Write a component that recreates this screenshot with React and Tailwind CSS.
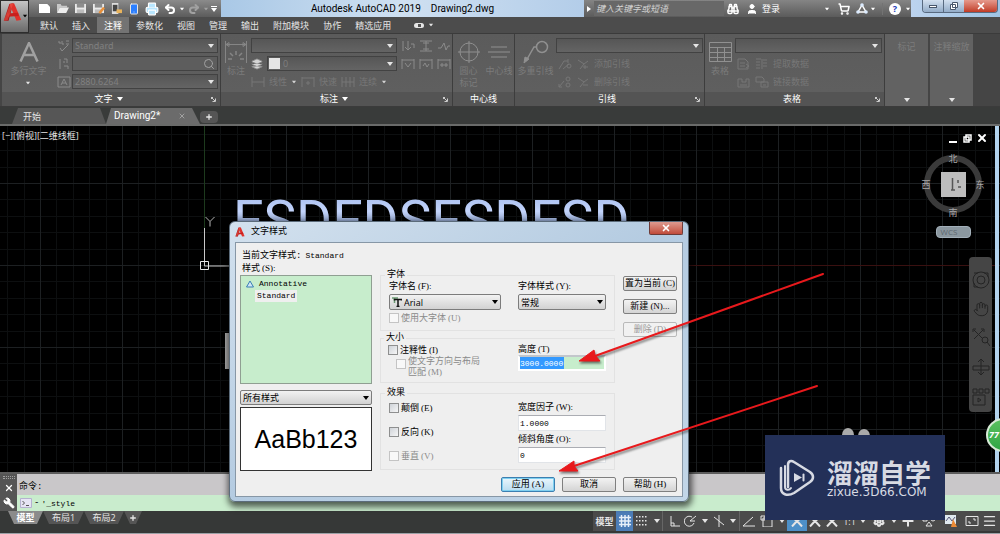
import React from "react";
import {
  Smartphone, Printer, Undo2, Redo2, User, Binoculars,
  ShoppingCart, Wrench, X, Plus, Settings, Menu, Hand, Layers, Search,
} from "lucide-react";

const SANS = "font-['Open_Sans','Noto_Sans_CJK_SC',sans-serif]";
const MONO = "font-['Liberation_Mono','Noto_Sans_CJK_SC',monospace]";

function Caret({ className = "" }) {
  return (
    <svg viewBox="0 0 6 4" className={"h-1 w-1.5 shrink-0 " + className} aria-hidden="true">
      <path d="M0 0h6L3 4z" fill="currentColor" />
    </svg>
  );
}

function LogoA({ className }) {
  return (
    <svg viewBox="0 0 24 24" className={className} aria-hidden="true">
      <path d="M1 23L8 2l5-1-6 22z" fill="#a81618" />
      <path d="M8 2l6-1 9 21-6 1z" fill="#e0312b" />
      <path d="M5 14l14-1 1 4-14 1z" fill="#c8201e" />
      <path d="M9 2l4-1-7 21-5 1z" fill="#ef5a4b" opacity=".55" />
    </svg>
  );
}

/* ---------- title bar ---------- */

function Disk() {
  return (
    <>
      <path d="M1 1h12v10H1z" fill="#e9e9e9" />
      <path d="M3 1h8v4H3z" fill="#8d8d8d" />
      <path d="M3 7h8v4H3z" fill="#bcbcbc" />
    </>
  );
}

const quickTools = [
  ["新建", <path key="n" d="M1 1h9l3 3v7H1z" fill="#fff" />],
  ["打开", <g key="o"><path d="M1 1h4l1 2h6v2H4l-3 6z" fill="#c8c8c8" /><path d="M4 5h10l-3 6H1z" fill="#ededed" /></g>],
  ["保存", <Disk key="s" />],
  ["另存为", <g key="a"><Disk /><path d="M7 10l5-6 2 2-5 6z" fill="#e8903a" /></g>],
  ["从移动设备打开", <g key="m"><path d="M2 0h7v12H2z" fill="#dcdcdc" /><path d="M3 2h5v7H3z" fill="#444" /><path d="M7 7h6v4H7z" fill="#e9b45c" /></g>],
  ["保存到移动设备", null],
  ["打印", null],
];

function TitleBar() {
  return (
    <div className="flex h-[17px] items-stretch text-[10px] leading-none">
      <div className="flex w-48 items-center bg-linear-to-b from-[#8b8b8b] to-[#5c5c5c] pl-1.5 text-white">
        {quickTools.map(([name, art]) => (
          <button key={name} aria-label={name} className="flex w-[18px] shrink-0 justify-center">
            {art && <svg viewBox="0 0 14 12" className="h-[11px] w-[13px]">{art}</svg>}
            {name === "保存到移动设备" && <Smartphone className="size-3 fill-blue-500 text-neutral-200" />}
            {name === "打印" && <Printer className="size-3.5 fill-sky-200 text-white" />}
          </button>
        ))}
        <button aria-label="放弃" className="flex w-[18px] justify-center"><Undo2 className="size-3" strokeWidth={4} /></button>
        <Caret className="scale-75" />
        <button aria-label="重做" className="flex w-[18px] justify-center text-neutral-400"><Redo2 className="size-3" strokeWidth={4} /></button>
        <Caret className="scale-75 text-neutral-400" />
        <button aria-label="自定义" className="ml-0.5 flex flex-col items-center gap-px">
          <span className="h-px w-1.5 bg-white" />
          <Caret />
        </button>
      </div>
      <h1 className="flex flex-1 items-center justify-center gap-2.5 bg-linear-to-r from-[#a9c8e6] via-[#cfe0f1] to-[#b3cde9] font-['Roboto',sans-serif] whitespace-nowrap text-black">
        <span>Autodesk AutoCAD 2019</span>
        <span>Drawing2.dwg</span>
      </h1>
      <div className="flex w-[327px] items-center bg-linear-to-b from-[#858585] to-[#5b5b5b] text-white">
        <button aria-label="展开搜索" className="flex w-2.5 justify-center"><Caret className="-rotate-90" /></button>
        <input aria-label="搜索" placeholder="键入关键字或短语" className="h-[15px] w-[130px] bg-[#686868] px-0.5 text-[9px] italic placeholder:text-neutral-300" />
        <button aria-label="查找" className="flex w-[18px] justify-center"><Binoculars className="size-3" strokeWidth={3} /></button>
        <button className="flex items-center gap-1 pl-1 text-[9px]"><User className="size-3 fill-white" />登录</button>
        <Caret className="ml-11 scale-75" />
        <button aria-label="商店" className="ml-2 flex"><ShoppingCart className="size-3" strokeWidth={3} /></button>
        <button aria-label="应用中心" className="ml-1.5 flex">
          <svg viewBox="0 0 12 12" className="size-3"><path d="M6 2L2 9h8z" fill="none" stroke="white" strokeWidth="1.5" /><g fill="#dbeafe"><circle cx="6" cy="2" r="1.8" /><circle cx="2" cy="9" r="1.8" /><circle cx="10" cy="9" r="1.8" /></g></svg>
        </button>
        <Caret className="ml-0.5 scale-75" />
        <span className="ml-1.5 h-3 w-px bg-neutral-500" />
        <button aria-label="帮助" className="ml-1.5 flex size-3 items-center justify-center rounded-full bg-white text-[9px] font-bold text-blue-800">?</button>
        <Caret className="ml-1 scale-75" />
      </div>
      <div className="flex w-[89px] items-start justify-end bg-linear-to-r from-[#bcd3ee] to-[#9fc4e4] pr-0.5">
        <div className="flex h-[13px] overflow-hidden rounded-b border border-t-0 border-[#586a80]">
          <button aria-label="最小化" className="flex w-[21px] items-end justify-center border-r border-[#586a80] bg-linear-to-b from-[#d3e1f0] to-[#93acc8] pb-1">
            <span className="h-[3px] w-2 border border-[#47566b] bg-white" />
          </button>
          <button aria-label="还原" className="flex w-5 items-center justify-center bg-linear-to-b from-[#d3e1f0] to-[#93acc8]">
            <svg viewBox="0 0 8 8" className="size-2"><path d="M2.5.5h5v5h-5zM.5 2.5h5v5h-5z" fill="white" stroke="#47566b" /></svg>
          </button>
          <button aria-label="关闭" className="flex w-[33px] items-center justify-center bg-linear-to-b from-[#e5998c] to-[#c03a25] text-white"><X className="size-2.5" strokeWidth={4} /></button>
        </div>
      </div>
    </div>
  );
}

const ribbonTabs = ["默认", "插入", "注释", "参数化", "视图", "管理", "输出", "附加模块", "协作", "精选应用"];

function RibbonTabs() {
  return (
    <nav className="flex h-4 items-stretch bg-[#4c4c4c] pl-1 text-[9px] leading-none text-neutral-200">
      {ribbonTabs.map((t) => (
        <button key={t} className={"px-[7px] " + (t === "注释" ? "bg-[#737373] text-white" : "")}>{t}</button>
      ))}
      <button aria-label="显示选项" className="ml-4 flex items-center gap-1">
        <span className="flex h-[5px] w-2.5 justify-center rounded-sm bg-neutral-200"><span className="mt-px size-[3px] bg-neutral-600" /></span>
        <Caret className="scale-75" />
      </button>
    </nav>
  );
}

/* ---------- ribbon ---------- */

function Panel({ title, caret, launcher = true, className, children }) {
  return (
    <section className={"flex flex-col border-r border-[#3d3d3d] bg-linear-to-b from-[#5b5b5b] to-[#606060] " + className}>
      <div className="flex flex-1 pt-1">{children}</div>
      <div className="flex h-[14px] items-center bg-[#545454] px-1 text-[9px] text-white">
        <span className="flex flex-1 items-center justify-center gap-1">{title}{caret && <Caret />}</span>
        {launcher && <svg viewBox="0 0 5 5" className="size-[5px]"><path d="M0 .5h2M.5 0v2M1 1l3 3M4.5 1.5v3h-3" stroke="#ccc" fill="none" /></svg>}
      </div>
    </section>
  );
}

function Combo({ label, value = "", className = "" }) {
  return (
    <span className={"relative block h-[15px] " + className}>
      <select aria-label={label} className="block h-full w-full appearance-none border border-[#424242] bg-linear-to-b from-[#565656] to-[#646464] px-0.5 font-['Noto_Sans',sans-serif] text-[9px] leading-none text-[#808080]">
        <option>{value}</option>
      </select>
      <Caret className="pointer-events-none absolute top-1.5 right-1 text-neutral-200" />
    </span>
  );
}

function BigTool({ label, className = "", children }) {
  return (
    <button className={"flex shrink-0 flex-col items-center text-[9px] leading-3 text-[#7b7b7b] " + className}>
      <span className="flex h-[27px] items-center text-[#909090]">{children}</span>
      {label}
    </button>
  );
}

function Glyph({ d, className = "h-3 w-3.5" }) {
  return (
    <svg viewBox="0 0 14 12" className={"shrink-0 " + className} fill="none" stroke="currentColor" aria-hidden="true"><path d={d} /></svg>
  );
}

const smallRow = "flex h-[15px] items-center text-[9px] leading-none text-[#777]";

function Ribbon() {
  return (
    <div className="flex h-[74px] items-stretch border-y border-[#3b3b3b] bg-[#454545] pl-0.5 text-[#8b8b8b]">
      <Panel title="文字" caret className="w-[219px]">
        <BigTool
          label={<span className="flex flex-col items-center gap-1">多行文字<Caret className="scale-75 text-neutral-200" /></span>}
          className="w-[53px]"
        >
          <svg viewBox="0 0 20 20" className="size-5"><path d="M1.5 19.5L10 1l8.500 18.500M4.500 13h11" fill="none" stroke="#a0a0a0" strokeWidth="2.500" /></svg>
        </BigTool>
        <div className="flex w-[17px] flex-col items-center gap-[3px]">
          <span className="flex h-[15px] items-center"><Glyph d="M1 2h2v2M5 1v3h2M9 1h3M9 4h3M3 8l2 3 6-6" /></span>
          <span className="flex h-[15px] items-center"><Glyph d="M3 1v10M7 1h3v4M7 3v2M7 8h4v3" /></span>
          <span className="flex h-[15px] items-center"><Glyph d="M1 1h12v10h-12zM4 9l3-6 3 6M5 7h4" /></span>
        </div>
        <div className="flex flex-1 flex-col gap-[3px] pr-0.5">
          <Combo label="文字样式" value="Standard" />
          <span className="flex h-[15px] items-center justify-end border border-[#424242] bg-[#5d5d5d] px-0.5">
            <input aria-label="查找文字" className="h-full w-full bg-transparent text-[9px]" />
            <Search className="size-3 shrink-0 text-neutral-400" />
          </span>
          <Combo label="文字高度" value="2880.6264" />
        </div>
      </Panel>

      <Panel title="标注" caret className="w-[232px]">
        <BigTool label="标注" className="w-[30px]">
          <svg viewBox="0 0 24 24" className="size-6" fill="none" stroke="#858585"><path d="M1.500 1v22M22.500 1v22M2 4.500h20M2 4.500l3-2v4zM22 4.500l-3-2v4z" /><path d="M12 11v4M6 13l3 3M18 13l-3 3M4 19h4M16 19h4" strokeWidth="1.500" /></svg>
        </BigTool>
        <div className="flex flex-1 flex-col gap-[3px]">
          <div className="flex items-center gap-1">
            <Combo label="标注样式" className="w-[146px]" />
            <Glyph d="M2 1v10M7 1v8M4 7l3 3 3-3M10 4h3v4" />
            <Glyph d="M1 1h12M1 11h12M7 1v10M4 3h6M4 9h6" />
            <Glyph d="M1 8h3l3-5 2 7 2-4h2" />
          </div>
          <div className="flex items-center gap-1">
            <Layers className="size-3 fill-neutral-300" />
            <span className="relative w-[130px]">
              <Combo label="图层" />
              <span className="absolute top-0.5 left-0.5 size-[11px] bg-neutral-200" />
              <span className="absolute top-[3px] left-4 text-[9px] leading-none text-[#808080]">0</span>
            </span>
            <Glyph d="M1 1v10M13 1v10M1 2h12M4 5l3 4 3-4" />
            <Glyph d="M1 1v10M13 1v10M1 2h12M4 8l2-3 2 4 2-3" />
            <Glyph d="M1 1v10M13 1v10M1 2h12M3 7h8M5 5v4M9 5v4" />
          </div>
          <div className={smallRow + " gap-1"}>
            <button className="flex items-center gap-1"><Glyph d="M1 1v10M13 1v10M1 6h12" />线性</button>
            <Caret className="scale-75 text-neutral-300" />
            <button className="flex items-center gap-1"><Glyph d="M1 1v10M13 1v10M1 2h12M5 7h4M7 5v4" />快速</button>
            <button className="flex items-center gap-1"><Glyph d="M1 1v10M5 1v10M9 1v10M13 1v10M1 6h12" />连续</button>
            <Caret className="scale-75 text-neutral-300" />
          </div>
        </div>
      </Panel>

      <Panel title="中心线" launcher={false} className="w-[62px]">
        <BigTool label={<span>圆心<br />标记</span>} className="w-[31px]">
          <svg viewBox="0 0 22 22" className="size-[22px]" fill="none" stroke="currentColor"><circle cx="11" cy="11" r="9" /><path d="M11 0v22M0 11h22" /></svg>
        </BigTool>
        <BigTool label="中心线" className="w-[30px]">
          <svg viewBox="0 0 22 22" className="size-[22px]" fill="none" stroke="currentColor"><path d="M3 6h16M0 11h22M3 16h16" /></svg>
        </BigTool>
      </Panel>

      <Panel title="引线" className="w-[190px]">
        <BigTool label="多重引线" className="w-[41px]">
          <svg viewBox="0 0 26 24" className="h-6 w-[26px]" fill="none" stroke="currentColor"><circle cx="19" cy="7" r="5.500" strokeWidth="1.500" /><path d="M14 7h-3L3 21" strokeWidth="1.500" /><path d="M1 23l1-6 4 2z" fill="currentColor" /></svg>
        </BigTool>
        <div className="flex flex-1 flex-col gap-[3px] pr-px">
          <Combo label="引线样式" />
          <div className={smallRow + " gap-1 pl-0.5"}><Glyph d="M1 11l5-8h4M10 1v4M5 11l6-5M9 8a2 2 0 1 0 4 0a2 2 0 1 0-4 0" /><Glyph d="M2 2l6 4 4-3M8 6l-4 5M9 7v4M7 9h5" /><button>添加引线</button></div>
          <div className={smallRow + " gap-1 pl-0.5"}><Glyph d="M1 11l5-6M1 8v3h3M8 3a2 2 0 1 0 4 0a2 2 0 1 0-4 0M8 9a2 2 0 1 0 4 0a2 2 0 1 0-4 0" /><Glyph d="M2 2l6 4 4-3M8 6l-4 5M7 9h5" /><button>删除引线</button></div>
        </div>
      </Panel>

      <Panel title="表格" className="w-[180px]">
        <BigTool label="表格" className="w-[30px]">
          <svg viewBox="0 0 23 20" className="h-5 w-[23px]" fill="none" stroke="currentColor"><path d="M.5.500h22v19h-22zM.5 5.500h22M.5 10.500h22M.5 15.500h22M8.500 5v14M15.500 5v14" /></svg>
        </BigTool>
        <div className="flex flex-1 flex-col gap-[3px] pr-0.5">
          <Combo label="表格样式" />
          <div className={smallRow + " gap-1 pl-0.5"}><Glyph d="M1 1h7l3 3v7h-10zM3 5h5M3 8h5M9 6l3 2-3 2" /><Glyph d="M1 1h5M1 4h4M1 7h4M1 10h4M8 2h4M8 5h4M8 8h4M7 1v10" /><button>提取数据</button></div>
          <div className={smallRow + " gap-1 pl-0.5"}><Glyph d="M1 3h4v3h4v-3h3v8h-11zM3 9h7" /><Glyph d="M1 1h6l2 2v3h-8zM6 6h7v5h-7zM8 9h3" /><button>链接数据</button></div>
        </div>
      </Panel>

      {["标记", "注释缩放"].map((name) => (
        <button key={name} className="mr-0.5 flex w-[43px] flex-col items-center justify-between bg-[#626262] pt-2 pb-1 text-[9px] leading-none text-[#7d7d7d]">
          {name}
          <Caret className="text-neutral-200" />
        </button>
      ))}
    </div>
  );
}

function DocTabs() {
  return (
    <div className="flex h-[19px] items-end border-b-2 border-[#6a6b6a] bg-[#393b3a] pl-3 text-[10px] leading-none text-neutral-200">
      <button className="h-4 w-[94px] bg-[#565656] pl-[11px] text-left text-[9px] [clip-path:polygon(6px_0,88px_0,100%_100%,0_100%)]">开始</button>
      <button className="flex h-4 w-[94px] items-center justify-between bg-[#6b6b6b] pr-3.5 pl-2 font-['Roboto',sans-serif] text-white [clip-path:polygon(5px_0,86px_0,100%_100%,0_100%)]">
        Drawing2*<X className="size-2 text-neutral-400" strokeWidth={3} />
      </button>
      <button aria-label="新图形" className="mb-px flex h-3 w-[18px] items-center justify-center rounded bg-[#555]"><Plus className="size-2" strokeWidth={4} /></button>
    </div>
  );
}

/* ---------- drawing canvas ---------- */

const minor = [16, 33, 49, 66];

function Canvas() {
  return (
    <main className="relative flex-1 overflow-hidden bg-black">
      <svg className="absolute inset-0 h-full w-full" aria-hidden="true">
        <defs>
          <pattern id="grid" x="40" y="57" width="82" height="82" patternUnits="userSpaceOnUse">
            {minor.map((m) => (
              <path key={m} d={`M${m + 0.5} 0v82M0 ${m + 0.5}h82`} stroke="#0d0f10" />
            ))}
            <path d="M.5 0v82M0 .5h82" stroke="#1d2022" />
          </pattern>
          <linearGradient id="chrome" x1="0" y1="0" x2="0" y2="1">
            <stop offset="0" stopColor="#9db4e8" />
            <stop offset=".35" stopColor="#c3d4fb" />
            <stop offset=".6" stopColor="#7285ad" />
          </linearGradient>
        </defs>
        <rect width="100%" height="100%" fill="url(#grid)" />
        <path d="M204.500 0v102" stroke="#1d3a1d" />
        <path d="M240 139.500h756" stroke="#3a1010" />
        <path d="M204.500 102v38h30" stroke="#c8c8c8" fill="none" />
        <path d="M200.500 135.500h8v8h-8z" stroke="#e8e8e8" fill="none" />
        <path d="M205.500 91l4.500 4.500 4.500-4.500M210 95.500v5" stroke="#b5b5b5" fill="none" />
        <path d="M227 207v36" stroke="#aaa" strokeWidth="4" />
        <ellipse cx="848" cy="309" rx="6" ry="7" fill="#aaa" />
        <ellipse cx="864" cy="310" rx="6" ry="7" fill="#aaa" />
        <text x="233" y="114" fontSize="55" fontFamily="Roboto, sans-serif" fill="url(#chrome)">FSDFDSFSDFSD</text>
      </svg>

      <p className="relative px-0.5 pt-1 text-[9px] leading-3 text-neutral-200">[−][俯视][二维线框]</p>

      <div className="absolute top-1.5 right-3 flex items-center gap-1 text-white">
        <button aria-label="最小化视口" className="flex h-2.5 w-3 items-end justify-center"><span className="h-0.5 w-2 bg-white" /></button>
        <button aria-label="还原视口"><svg viewBox="0 0 9 9" className="size-[9px]"><path d="M3 1h5v5h-5zM1 3h5v5h-5z" fill="black" stroke="white" strokeWidth="1.500" /></svg></button>
        <button aria-label="关闭视口"><X className="size-3" strokeWidth={4} /></button>
      </div>

      <div className="absolute top-6 right-3.5 flex flex-col items-center">
        <svg viewBox="0 0 66 68" className="h-[68px] w-[66px] font-['Noto_Sans_CJK_SC',sans-serif]" aria-label="ViewCube">
          <circle cx="33" cy="34" r="26" fill="none" stroke="#3a3a3a" strokeWidth="6" />
          <rect x="21" y="22" width="25" height="25" fill="#bdbdbd" />
          <path d="M32.500 28v12M31 40h4M38 30v3M38 37h3" stroke="#555" strokeWidth="1.500" />
          <g fill="#a8a8a8" fontSize="9" textAnchor="middle">
            <text x="33" y="12">北</text><text x="33" y="66">南</text><text x="6" y="38">西</text><text x="60" y="38">东</text>
          </g>
        </svg>
        <button className="mt-2 h-3 w-[35px] rounded-sm border border-[#a3b0ba] bg-[#8b979f] pr-2 text-[8px] leading-none text-[#5d6870]">WCS</button>
      </div>

      <div className="absolute top-[131px] right-2 flex h-[155px] w-[23px] flex-col items-center justify-around rounded-sm bg-[#454545] pt-2 text-[#242424]">
        <svg viewBox="0 0 18 18" className="size-[18px]" fill="none" stroke="currentColor"><circle cx="9" cy="9" r="8" /><circle cx="9" cy="9" r="4" /><path d="M2 2h4M12 2h4v4M2 12v4h4" /></svg>
        <Hand className="size-4" strokeWidth={1.5} />
        <svg viewBox="0 0 18 18" className="size-[18px]" fill="none" stroke="currentColor"><path d="M2 2l9 9M11 2l-9 9M1 4v-3h3M12 4v-3h-3" /><circle cx="13" cy="12" r="3" /><path d="M15 14l3 4" /></svg>
        <svg viewBox="0 0 18 18" className="size-[18px]" fill="none" stroke="currentColor"><path d="M9 1v16M6 4l3-3 3 3M6 14l3 3 3-3" /><path d="M1 8h16v4H1z" /></svg>
        <svg viewBox="0 0 18 18" className="size-[18px]" fill="none" stroke="currentColor"><path d="M1 1h4v4h-4zM7 1h4v4h-4zM13 1h4v4h-4zM1 7h12v10h-12zM6 10v4l3-2z" /></svg>
      </div>

      <div className="absolute inset-y-0 right-px w-1 bg-[#b2d3ee]" />
      <div className="absolute top-[292px] -right-5 h-[34px] w-[34px] rounded-full border-2 border-[#d6ead6] bg-linear-to-b from-[#59c15f] to-[#2fa544] pt-2.5 pl-px text-[9px] leading-none font-bold text-white italic">77</div>
    </main>
  );
}

/* ---------- command line and status bar ---------- */

function CommandLine() {
  return (
    <div className="flex h-[39px] border-t-2 border-[#5c5c5c]">
      <div className="flex w-[17px] flex-col items-center justify-between bg-[#555] py-0.5 text-white">
        <span className="h-[3px] w-3 border-y border-dotted border-neutral-400" />
        <button aria-label="关闭命令行"><X className="size-2.5" strokeWidth={3} /></button>
        <button aria-label="自定义命令行"><Wrench className="size-3 -scale-x-100 fill-white" /></button>
      </div>
      <div className={"flex flex-1 flex-col text-black " + MONO}>
        <p className="flex h-[21px] items-end bg-[#c9c7c9] px-0.5 pb-0.5 text-[9px] leading-3">命令:</p>
        <label className="flex h-4 items-center gap-0.5 bg-[#c9eccd] pl-[3px] text-[9px] leading-none">
          <svg viewBox="0 0 12 10" className="h-2.5 w-3"><path d="M.5.500h11v9h-11z" fill="#e6e4f4" stroke="#b5b1cf" /><path d="M2.500 3l2 2-2 2M6 7.500h3" fill="none" stroke="#555" /></svg>
          <span>-</span>
          <input aria-label="命令" defaultValue="'_style" className="w-full flex-1 bg-transparent text-[8px]" />
        </label>
      </div>
    </div>
  );
}

const statusTools = [
  ["格栅", "w-[17px] bg-[#4d7eb8]", "grid"],
  ["捕捉", "w-[18px]", "dots"],
  ["捕捉选项", "w-[11px]", "caret"],
  ["正交", "w-[22px] border-l border-[#666]", "M4 1v10h9M4 8h3v3"],
  ["极轴", "w-[14px]", "M6 6l6-5M6 6h5M10 8a5 5 0 1 1-2-6"],
  ["极轴选项", "w-[13px]", "caret"],
  ["等轴测", "w-[16px]", "M7 0v12M2 2l10 8"],
  ["等轴测选项", "w-[12px]", "caret"],
  ["追踪", "w-[19px] border-l border-[#666]", "M13 11h-12L11 2"],
  ["对象捕捉", "w-[18px]", "M3 3h9v9h-9zM1 1h4v4h-4z"],
  ["捕捉模式", "w-[11px]", "caret"],
  ["注释可见性", "w-[20px] bg-[#4d90c8]", "person"],
  ["自动缩放", "w-[15px]", "person"],
  ["注释监视", "w-[19px]", "person"],
];

function StatusIcon({ kind }) {
  if (kind === "caret") return <Caret />;
  if (kind === "grid")
    return (
      <svg viewBox="0 0 14 14" className="size-3.5" stroke="#e8f0f8" strokeWidth="1.500"><path d="M3.500 1v12M7 1v12M10.500 1v12M1 3.500h12M1 7h12M1 10.500h12" /></svg>
    );
  if (kind === "dots")
    return (
      <svg viewBox="0 0 12 12" className="size-3" fill="currentColor">
        {[1, 5, 9].map((y) => [0, 3, 6, 9].map((x) => <rect key={x + "-" + y} x={x} y={y} width="1.500" height="1.500" />))}
      </svg>
    );
  if (kind === "person") return <Glyph d="M7 1v5L2 11.500M7 6l5 5.500M4 4l3 2 3-2" className="h-3 w-3.5 stroke-2" />;
  return <Glyph d={kind} />;
}

const sheetTab = "h-[13px] text-[9px] leading-none [clip-path:polygon(0_0,100%_0,calc(100%-6px)_100%,6px_100%)]";

function StatusBar() {
  return (
    <footer className="flex h-[23px] items-start justify-between border-b border-[#9ba1a6] bg-[#363837] text-neutral-200">
      <div className="flex pl-2">
        <button className={sheetTab + " w-[35px] bg-[#8b8b8b] font-bold text-white"}>模型</button>
        <button className={sheetTab + " w-[41px] bg-[#555]"}>布局1</button>
        <button className={sheetTab + " w-[40px] bg-[#555]"}>布局2</button>
        <button aria-label="新建布局" className={sheetTab + " flex w-[18px] items-center justify-center bg-[#555]"}><Plus className="size-2" strokeWidth={4} /></button>
      </div>
      <div className="flex h-5 items-stretch bg-[#4b4b4b] pr-[3px] text-[9px] leading-none">
        <button className="w-[23px] font-bold">模型</button>
        {statusTools.map(([name, cls, kind]) => (
          <button key={name} aria-label={name} className={"flex shrink-0 items-center justify-center " + cls}><StatusIcon kind={kind} /></button>
        ))}
        <button className="w-[17px]">1:1</button>
        <button aria-label="比例" className="flex w-2.5 items-center justify-center"><Caret /></button>
        <button aria-label="切换工作空间" className="flex w-[21px] items-center justify-center"><Settings className="size-3" strokeWidth={4} /></button>
        <button aria-label="工作空间选项" className="flex w-[9px] items-center justify-center"><Caret /></button>
        <button aria-label="注释监视器" className="flex w-5 items-center justify-center"><Plus className="size-4" strokeWidth={3} /></button>
        <button aria-label="隔离对象" className="flex w-[21px] items-center justify-center"><Glyph d="M1 2h4v4h-4zM9 4a2 2 0 1 0 4 0a2 2 0 1 0-4 0M7 7l-3 4h6z" /></button>
        <button aria-label="图形性能" className="flex w-[23px] items-center justify-center">
          <svg viewBox="0 0 12 12" className="size-3"><path d="M0 0h11v9h-11z" fill="#dfe8ee" /><path d="M1 6l3-4 3 4 3-4" stroke="#557" fill="none" /><path d="M8 4l4 8h-6z" fill="#ec8a35" /></svg>
        </button>
        <button aria-label="全屏显示" className="flex w-5 items-center justify-center"><Glyph d="M1 1.500h12v9h-12zM4 8v-2M4 8h2M10 4v2M10 4h-2" /></button>
        <button aria-label="自定义" className="flex w-[15px] items-center justify-center"><Menu className="size-4" /></button>
      </div>
    </footer>
  );
}

/* ---------- text style dialog ---------- */

function Txt({ t, k }) {
  return <span className="whitespace-nowrap">{t}{k && <span className="ml-0.5 font-['Liberation_Serif',serif]">{k}</span>}</span>;
}

function DlgSelect({ id, value, label, icon, className = "" }) {
  return (
    <span className={"relative block " + className}>
      <select id={id} aria-label={label} className={"block h-full w-full appearance-none rounded-xs border border-[#7c7c7c] bg-linear-to-b from-[#f2f2f2] to-[#d2d2d2] text-[9px] leading-[13px] text-black " + (icon ? "pl-3.5 font-['Open_Sans',sans-serif]" : "pl-0.5 font-['Noto_Sans_CJK_SC',sans-serif]")}>
        <option>{value}</option>
      </select>
      {icon && (
        <svg viewBox="0 0 10 10" className="pointer-events-none absolute top-[3px] left-[3px] size-2.5" fill="none"><path d="M0 1h6M2.500 1v5" stroke="#6a9a72" strokeWidth="1.500" /><path d="M2.500 3.500v-1h7v1M6 2.500v7M4.500 9.500h3" stroke="#111" strokeWidth="1.500" /></svg>
      )}
      <Caret className="pointer-events-none absolute top-[6px] right-[3px] text-black" />
    </span>
  );
}

function Check({ t, k, disabled, className = "" }) {
  return (
    <label className={"flex h-3 items-center gap-0.5 leading-3 " + (disabled ? "text-[#8a8a8a] " : "") + className}>
      <input type="checkbox" disabled={disabled} className={"size-2.5 shrink-0 appearance-none border " + (disabled ? "border-[#c4c4c4] bg-[#f8f8f8]" : "border-[#8e8f8f] bg-linear-to-br from-[#cfd3d8] to-[#f6f6f6]")} />
      <Txt t={t} k={k} />
    </label>
  );
}

const dlgButton = "flex h-[15px] w-[54px] items-center justify-center rounded-xs border text-[9px] leading-3 whitespace-nowrap ";
const plain = "border-[#7f7f7f] bg-linear-to-b from-[#f3f3f3] to-[#d4d4d4]";
const groupBox = "flex min-w-0 justify-between border border-[#e2e2e2] pr-2";
const legend = "-ml-1 h-3 bg-[#efefef] px-0.5 leading-3";
const fieldLabel = "block h-[11px] leading-[11px]";
const field = "mt-0.5 block h-4 w-[88px] border border-[#e1e4e8] border-t-[#abadb3] bg-white px-px text-[8px] leading-none";

function TextStyleDialog() {
  return (
    <div role="dialog" aria-labelledby="dlg-title" className={"absolute top-[221px] left-[229px] w-[460px] rounded-md border border-[#5b6b7a] bg-linear-to-br from-[#d3e1ee] via-[#b4cbe1] to-[#c2d6e8] px-[5px] pb-1 text-[9px] text-black shadow-[1px_3px_6px_2px_rgba(0,0,0,0.6)] " + MONO}>
      <div className="flex h-5 items-start justify-between">
        <h2 id="dlg-title" className="flex items-center gap-1.5 pt-1 text-[9px] leading-3"><LogoA className="size-2.5" />文字样式</h2>
        <button aria-label="关闭" className="flex h-[13px] w-[34px] items-center justify-center rounded-b-xs border border-t-0 border-[#6d3b38] bg-linear-to-b from-[#dc9a90] to-[#c04a3a] text-white"><X className="size-2.5" strokeWidth={4} /></button>
      </div>
      <form className="border border-[#8797a6] bg-[#efefef] px-1 pt-1.5 pb-1">
        <p className="h-[13px] px-0.5 leading-[13px]">当前文字样式:<span className="ml-1 text-[8px]">Standard</span></p>
        <div className="flex items-start gap-2">
          <div className="flex w-[132px] flex-col">
            <span id="styles" className="h-[13px] px-0.5 leading-[13px]"><Txt t="样式" k="(S):" /></span>
            <ul aria-labelledby="styles" className="h-[109px] border border-[#8f9f92] bg-[#c7edcc] px-1 pt-0.5 text-[8px] leading-3">
              <li className="flex items-center gap-1">
                <svg viewBox="0 0 9 8" className="h-2 w-2.5"><path d="M4.500 1L8 7H1z" fill="#cfe6f6" stroke="#3a7fb5" /></svg>
                Annotative
              </li>
              <li className="ml-2.5 w-fit bg-[#efefef] px-0.5">Standard</li>
            </ul>
            <DlgSelect label="样式过滤" value="所有样式" className="mt-1.5 h-[15px]" />
            <div className="mt-0.5 flex h-16 items-center justify-center border border-[#333] bg-white font-['Liberation_Sans',sans-serif] text-[25px] leading-none">AaBb123</div>
          </div>

          <div className="flex w-[235px] flex-col pt-[7px]">
            <fieldset className={groupBox + " h-[62px] pl-2"}>
              <legend className={legend}>字体</legend>
              <div>
                <label htmlFor="font" className={fieldLabel}><Txt t="字体名" k="(F):" /></label>
                <DlgSelect id="font" icon value="Arial" className="mt-0.5 h-4 w-28" />
                <Check t="使用大字体" k="(U)" disabled className="mt-0.5" />
              </div>
              <div>
                <label htmlFor="fstyle" className={fieldLabel}><Txt t="字体样式" k="(Y):" /></label>
                <DlgSelect id="fstyle" value="常规" className="mt-0.5 h-4 w-[88px]" />
              </div>
            </fieldset>

            <fieldset className={groupBox + " mt-px h-[51px] pl-[7px]"}>
              <legend className={legend}>大小</legend>
              <div>
                <Check t="注释性" k="(I)" />
                <label className="ml-2 flex items-start gap-0.5 pt-px text-[#8a8a8a]">
                  <input type="checkbox" disabled className="mt-0.5 size-2.5 appearance-none border border-[#c4c4c4] bg-[#f8f8f8]" />
                  <span className="leading-[10px]">使文字方向与布局<br /><Txt t="匹配" k="(M)" /></span>
                </label>
              </div>
              <div>
                <label htmlFor="height" className={fieldLabel}><Txt t="高度" k="(T)" /></label>
                <input id="height" defaultValue="3000.0000" className="block h-4 w-[88px] border-2 border-white border-t-[#c2c6cb] bg-[linear-gradient(90deg,#3399ff_44px,#c7edcc_44px)] bg-clip-padding text-[8px] leading-none text-white" />
              </div>
            </fieldset>

            <fieldset className={groupBox + " mt-1 h-[83px] pl-2"}>
              <legend className={legend}>效果</legend>
              <div className="flex flex-col gap-3 pt-[3px]">
                <Check t="颠倒" k="(E)" />
                <Check t="反向" k="(K)" />
                <Check t="垂直" k="(V)" disabled />
              </div>
              <div className="pt-[3px]">
                <label htmlFor="wf" className={fieldLabel}><Txt t="宽度因子" k="(W):" /></label>
                <input id="wf" defaultValue="1.0000" className={field} />
                <label htmlFor="oa" className={fieldLabel + " mt-[3px]"}><Txt t="倾斜角度" k="(O):" /></label>
                <input id="oa" defaultValue="0" className={field} />
              </div>
            </fieldset>
          </div>

          <div className="flex flex-col gap-2 pt-3.5">
            <button type="button" className={dlgButton + plain}><Txt t="置为当前" k="(C)" /></button>
            <button type="button" className={dlgButton + plain}><Txt t="新建" k="(N)..." /></button>
            <button type="button" disabled className={dlgButton + "border-[#b9b9b9] bg-[#f1f1f1] text-[#9a9a9a]"}><Txt t="删除" k="(D)" /></button>
          </div>
        </div>
        <div className="mt-1.5 flex justify-end gap-[7px] pr-px">
          <button type="button" className={dlgButton + "border-[#3c7fb1] bg-linear-to-b from-[#eaf6fd] to-[#b9dcf0] ring-1 ring-[#7fd0f0] ring-inset"}><Txt t="应用" k="(A)" /></button>
          <button type="button" className={dlgButton + plain}>取消</button>
          <button type="button" className={dlgButton + plain}><Txt t="帮助" k="(H)" /></button>
        </div>
      </form>
    </div>
  );
}

/* ---------- overlays ---------- */

function Arrows() {
  return (
    <svg className="pointer-events-none absolute inset-0 h-full w-full drop-shadow-[1px_2px_1px_rgba(0,0,0,0.5)]" aria-hidden="true">
      <g fill="#e8191c" stroke="#e8191c">
        <path d="M823 274L595 356" strokeWidth="2" strokeLinecap="round" />
        <path d="M579 361l15-11 1 5 5 6z" />
        <path d="M817 386L574 466" strokeWidth="2" strokeLinecap="round" />
        <path d="M559 471l15-10 0 5 4 5z" />
      </g>
    </svg>
  );
}

function Watermark() {
  return (
    <div className="absolute top-[435px] right-[55px] flex h-[85px] w-[180px] items-center gap-3 bg-[#233058] pl-3.5 text-[#d7dae3]">
      <svg viewBox="0 0 36 38" className="h-[38px] w-9" fill="none" stroke="currentColor" strokeWidth="2.500" strokeLinecap="round" aria-hidden="true">
        <path d="M9 28V6c0-4 3-5 6-3l16 10c4 3 4 7 0 10L15 34c-7 4-13 1-13-5V9" strokeLinejoin="round" />
        <path d="M6 7v21c0 3 4 4 6 1" strokeWidth="2" />
        <path d="M15 14v9l8-4.500z" fill="currentColor" stroke="none" />
        <path d="M24.500 15.500v6" strokeWidth="2" />
      </svg>
      <div className="flex flex-col items-start">
        <strong className="font-['Noto_Sans_CJK_SC',sans-serif] text-[26px] leading-7 font-bold whitespace-nowrap">溜溜自学</strong>
        <span className="font-['DejaVu_Sans',sans-serif] text-[12px] leading-3">zixue.3D66.COM</span>
      </div>
    </div>
  );
}

export default function App() {
  return (
    <div className={"relative flex min-h-screen flex-col overflow-hidden bg-[#454545] " + SANS}>
      <header>
        <div className="flex">
          <button aria-label="应用程序菜单" className="flex h-[33px] w-[29px] items-start border border-[#2d2d2d] bg-linear-to-b from-[#c4c4c4] to-[#6b6b6b] pt-px pl-0.5 text-black">
            <LogoA className="size-5" />
            <Caret className="mt-3 scale-75" />
          </button>
          <div className="min-w-0 flex-1">
            <TitleBar />
            <RibbonTabs />
          </div>
        </div>
        <Ribbon />
        <DocTabs />
      </header>
      <Canvas />
      <CommandLine />
      <StatusBar />
      <TextStyleDialog />
      <Watermark />
      <Arrows />
    </div>
  );
}
